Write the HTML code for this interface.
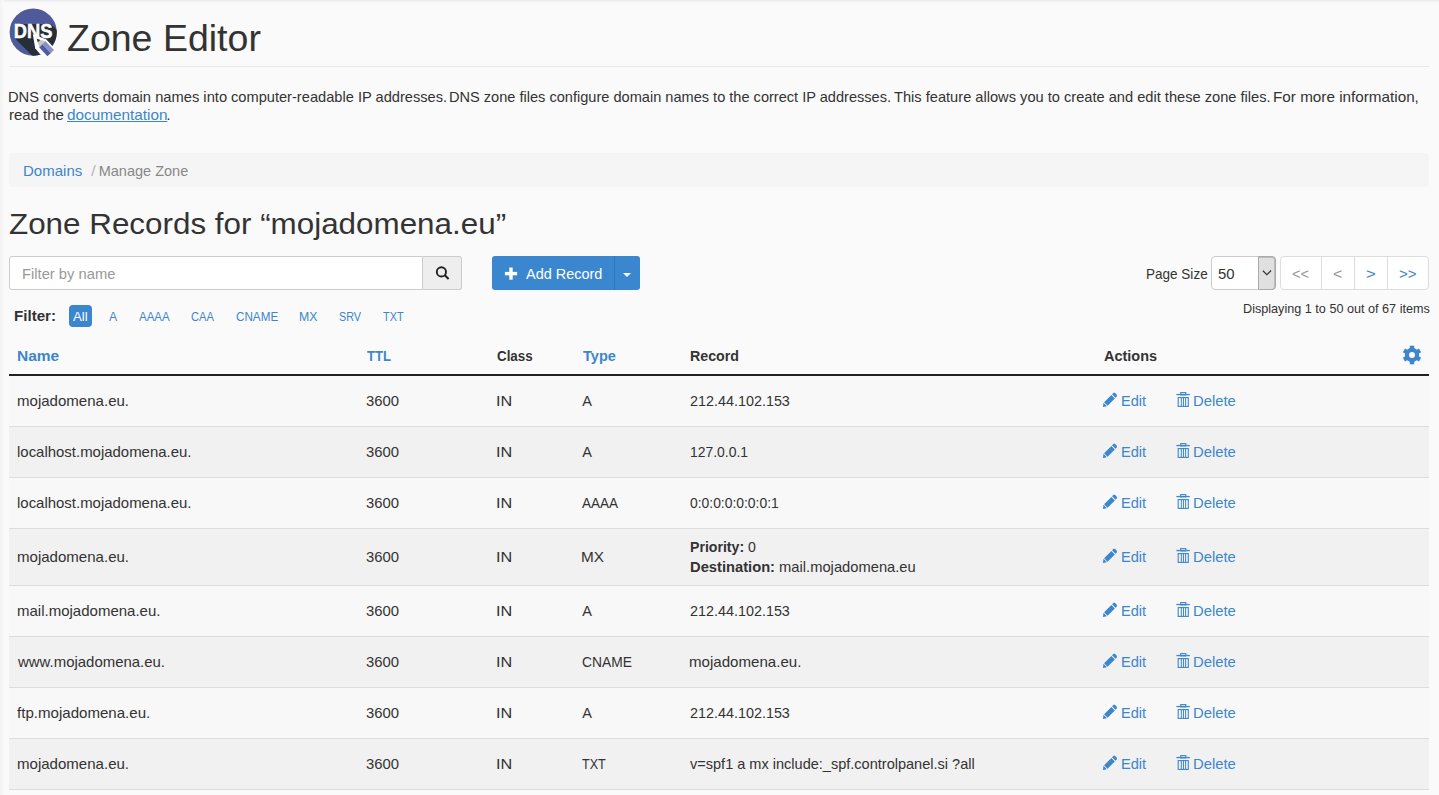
<!DOCTYPE html>
<html><head><meta charset="utf-8">
<style>
html,body{margin:0;padding:0;}
body{width:1439px;height:795px;overflow:hidden;background:#fafafa;position:relative;font-family:"Liberation Sans",sans-serif;color:#333;}
.a{position:absolute;}
.t{position:absolute;white-space:nowrap;line-height:1;}
</style></head><body>
<div class="a" style="left:0;top:0;width:1439px;height:1px;background:#ececec"></div><div class="a" style="left:0;top:1px;width:1439px;height:1px;background:#f3f3f3"></div><div class="a" style="left:0;top:2px;width:1439px;height:1px;background:#f7f7f7"></div>
<div class="a" style="left:0;top:0;width:2px;height:795px;background:#f4f4f4"></div><div class="a" style="left:2px;top:0;width:2px;height:795px;background:#f8f8f8"></div>
<svg class="a" style="left:0;top:0" width="70" height="66" viewBox="0 0 70 66">
  <defs><clipPath id="cc"><circle cx="33.2" cy="32.1" r="23.6"/></clipPath></defs>
  <circle cx="33.2" cy="32.1" r="24.3" fill="#fff"/>
  <circle cx="33.2" cy="32.1" r="23.6" fill="#4f5a9a"/>
  <g clip-path="url(#cc)">
    <polygon points="14.5,24 51,24 91,64 54.5,78 14.5,38" fill="#252f3a"/>
  </g>
  <text x="13.8" y="38.2" font-family="Liberation Sans" font-weight="bold" font-size="20" fill="#fff" stroke="#fff" stroke-width="0.5" textLength="38.6" lengthAdjust="spacingAndGlyphs">DNS</text>
  <polygon points="32.8,34 46.4,39.6 55.6,49.4 47.8,57.4 40.4,54.6 35.2,48.2" fill="#fff"/>
  <polygon points="36.9,38.9 45.4,41.3 39.3,47.4" fill="#c6c6c6"/>
  <polygon points="36.6,38.6 40.2,39.9 37.9,42.2" fill="#2a333d"/>
  <polygon points="42.35,44.35 45.4,41.3 54,50.1 50.8,53.3" fill="#8990c7"/>
  <polygon points="39.3,47.4 42.35,44.35 50.8,53.3 47.4,56.2" fill="#525ba1"/>
</svg>
<div class="a" style="left:9px;top:66px;width:1420px;height:1px;background:#e8e8e8"></div>
<div class="a" style="left:9px;top:153px;width:1420px;height:34px;background:#f5f5f5;border-radius:4px"></div>
<div class="a" style="left:9px;top:256px;width:412px;height:32px;background:#fff;border:1px solid #ccc;border-radius:3px 0 0 3px"></div>
<div class="a" style="left:423px;top:256px;width:38px;height:32px;background:#eee;border:1px solid #ccc;border-left:none;border-radius:0 3px 3px 0"></div>
<svg class="a" style="left:433px;top:263px" width="18" height="18" viewBox="0 0 18 18"><circle cx="8.4" cy="8.9" r="4.6" fill="none" stroke="#222" stroke-width="1.9"/><line x1="11.6" y1="12.1" x2="15.6" y2="16.1" stroke="#222" stroke-width="2.1"/></svg>
<div class="a" style="left:492px;top:256px;width:148px;height:34px;background:#3b87cf;border-radius:3px"></div>
<div class="a" style="left:614px;top:256px;width:1px;height:34px;background:#2f76ba"></div>
<svg class="a" style="left:504px;top:266px" width="15" height="15" viewBox="0 0 15 15"><rect x="5.3" y="1.5" width="3.4" height="12.2" fill="#fff"/><rect x="0.9" y="5.9" width="12.2" height="3.4" fill="#fff"/></svg>
<svg class="a" style="left:622px;top:272px" width="10" height="6" viewBox="0 0 10 6"><polygon points="1,1 9,1 5,5" fill="#fff"/></svg>
<div class="a" style="left:1211px;top:256px;width:63px;height:32px;background:#fff;border:1px solid #ccc;border-radius:4px"></div>
<div class="a" style="left:1258px;top:256px;width:16px;height:32px;background:#e0e0e0;border:1px solid #aaa;border-radius:0 4px 4px 0;box-shadow:inset 0 1px 0 #bdbdbd, inset -1px 0 0 #bdbdbd"></div>
<svg class="a" style="left:1260.5px;top:268px" width="12" height="9" viewBox="0 0 12 9"><polyline points="1.9,2.8 5.9,6.7 10.1,2.5" fill="none" stroke="#333" stroke-width="1.2"/></svg>
<div class="a" style="left:1280px;top:256px;width:147px;height:32px;background:#fff;border:1px solid #ddd;border-radius:4px"></div>
<div class="a" style="left:1321px;top:257px;width:1px;height:32px;background:#ddd"></div>
<div class="a" style="left:1354px;top:257px;width:1px;height:32px;background:#ddd"></div>
<div class="a" style="left:1387px;top:257px;width:1px;height:32px;background:#ddd"></div>
<div class="a" style="left:69px;top:305px;width:23px;height:22px;background:#3b87cf;border-radius:4px"></div>
<div class="a" style="left:9px;top:374px;width:1420px;height:2px;background:#222"></div>
<svg class="a" style="left:1402px;top:345px" width="20" height="20" viewBox="-10 -10 20 20">
<g fill="#3d86cc">
<circle r="7.2"/>
<rect x="-2.2" y="-9.3" width="4.4" height="4" transform="rotate(0)"/><rect x="-2.2" y="-9.3" width="4.4" height="4" transform="rotate(60)"/><rect x="-2.2" y="-9.3" width="4.4" height="4" transform="rotate(120)"/><rect x="-2.2" y="-9.3" width="4.4" height="4" transform="rotate(180)"/><rect x="-2.2" y="-9.3" width="4.4" height="4" transform="rotate(240)"/><rect x="-2.2" y="-9.3" width="4.4" height="4" transform="rotate(300)"/>
</g><circle r="3" fill="#fafafa"/></svg>
<div class="a" style="left:9px;top:376px;width:1420px;height:50px;background:#f8f8f8"></div><div class="a" style="left:9px;top:426px;width:1420px;height:1px;background:#ddd"></div><svg class="a" style="left:1102px;top:392px" width="17" height="16" viewBox="0 0 17 16"><path d="M0.9,14.9 L1.5,10.85 L4.95,14.3 Z M2.1,10.25 L9.41,2.94 L12.86,6.39 L5.55,13.7 Z M10.07,2.27 L11.53,0.81 L12.91,0.85 L14.95,2.89 L14.99,4.27 L13.53,5.73 Z" fill="#3d86cc"/></svg><svg class="a" style="left:1176px;top:392px" width="15" height="16" viewBox="0 0 15 16"><rect x="4.7" y="0.6" width="5.1" height="2.3" fill="none" stroke="#3d86cc" stroke-width="1.1"/><rect x="0.4" y="1.9" width="13.4" height="1.3" fill="#3d86cc"/><rect x="2.2" y="5.6" width="10.1" height="8.8" fill="none" stroke="#3d86cc" stroke-width="1.1"/><rect x="4.8" y="5.6" width="1" height="8.8" fill="#3d86cc"/><rect x="6.95" y="5.6" width="1" height="8.8" fill="#3d86cc"/><rect x="9.1" y="5.6" width="1" height="8.8" fill="#3d86cc"/></svg><div class="a" style="left:9px;top:427px;width:1420px;height:50px;background:#f1f1f1"></div><div class="a" style="left:9px;top:477px;width:1420px;height:1px;background:#ddd"></div><svg class="a" style="left:1102px;top:443px" width="17" height="16" viewBox="0 0 17 16"><path d="M0.9,14.9 L1.5,10.85 L4.95,14.3 Z M2.1,10.25 L9.41,2.94 L12.86,6.39 L5.55,13.7 Z M10.07,2.27 L11.53,0.81 L12.91,0.85 L14.95,2.89 L14.99,4.27 L13.53,5.73 Z" fill="#3d86cc"/></svg><svg class="a" style="left:1176px;top:443px" width="15" height="16" viewBox="0 0 15 16"><rect x="4.7" y="0.6" width="5.1" height="2.3" fill="none" stroke="#3d86cc" stroke-width="1.1"/><rect x="0.4" y="1.9" width="13.4" height="1.3" fill="#3d86cc"/><rect x="2.2" y="5.6" width="10.1" height="8.8" fill="none" stroke="#3d86cc" stroke-width="1.1"/><rect x="4.8" y="5.6" width="1" height="8.8" fill="#3d86cc"/><rect x="6.95" y="5.6" width="1" height="8.8" fill="#3d86cc"/><rect x="9.1" y="5.6" width="1" height="8.8" fill="#3d86cc"/></svg><div class="a" style="left:9px;top:478px;width:1420px;height:50px;background:#f8f8f8"></div><div class="a" style="left:9px;top:528px;width:1420px;height:1px;background:#ddd"></div><svg class="a" style="left:1102px;top:494px" width="17" height="16" viewBox="0 0 17 16"><path d="M0.9,14.9 L1.5,10.85 L4.95,14.3 Z M2.1,10.25 L9.41,2.94 L12.86,6.39 L5.55,13.7 Z M10.07,2.27 L11.53,0.81 L12.91,0.85 L14.95,2.89 L14.99,4.27 L13.53,5.73 Z" fill="#3d86cc"/></svg><svg class="a" style="left:1176px;top:494px" width="15" height="16" viewBox="0 0 15 16"><rect x="4.7" y="0.6" width="5.1" height="2.3" fill="none" stroke="#3d86cc" stroke-width="1.1"/><rect x="0.4" y="1.9" width="13.4" height="1.3" fill="#3d86cc"/><rect x="2.2" y="5.6" width="10.1" height="8.8" fill="none" stroke="#3d86cc" stroke-width="1.1"/><rect x="4.8" y="5.6" width="1" height="8.8" fill="#3d86cc"/><rect x="6.95" y="5.6" width="1" height="8.8" fill="#3d86cc"/><rect x="9.1" y="5.6" width="1" height="8.8" fill="#3d86cc"/></svg><div class="a" style="left:9px;top:529px;width:1420px;height:56px;background:#f1f1f1"></div><div class="a" style="left:9px;top:585px;width:1420px;height:1px;background:#ddd"></div><svg class="a" style="left:1102px;top:548px" width="17" height="16" viewBox="0 0 17 16"><path d="M0.9,14.9 L1.5,10.85 L4.95,14.3 Z M2.1,10.25 L9.41,2.94 L12.86,6.39 L5.55,13.7 Z M10.07,2.27 L11.53,0.81 L12.91,0.85 L14.95,2.89 L14.99,4.27 L13.53,5.73 Z" fill="#3d86cc"/></svg><svg class="a" style="left:1176px;top:548px" width="15" height="16" viewBox="0 0 15 16"><rect x="4.7" y="0.6" width="5.1" height="2.3" fill="none" stroke="#3d86cc" stroke-width="1.1"/><rect x="0.4" y="1.9" width="13.4" height="1.3" fill="#3d86cc"/><rect x="2.2" y="5.6" width="10.1" height="8.8" fill="none" stroke="#3d86cc" stroke-width="1.1"/><rect x="4.8" y="5.6" width="1" height="8.8" fill="#3d86cc"/><rect x="6.95" y="5.6" width="1" height="8.8" fill="#3d86cc"/><rect x="9.1" y="5.6" width="1" height="8.8" fill="#3d86cc"/></svg><div class="a" style="left:9px;top:586px;width:1420px;height:50px;background:#f8f8f8"></div><div class="a" style="left:9px;top:636px;width:1420px;height:1px;background:#ddd"></div><svg class="a" style="left:1102px;top:602px" width="17" height="16" viewBox="0 0 17 16"><path d="M0.9,14.9 L1.5,10.85 L4.95,14.3 Z M2.1,10.25 L9.41,2.94 L12.86,6.39 L5.55,13.7 Z M10.07,2.27 L11.53,0.81 L12.91,0.85 L14.95,2.89 L14.99,4.27 L13.53,5.73 Z" fill="#3d86cc"/></svg><svg class="a" style="left:1176px;top:602px" width="15" height="16" viewBox="0 0 15 16"><rect x="4.7" y="0.6" width="5.1" height="2.3" fill="none" stroke="#3d86cc" stroke-width="1.1"/><rect x="0.4" y="1.9" width="13.4" height="1.3" fill="#3d86cc"/><rect x="2.2" y="5.6" width="10.1" height="8.8" fill="none" stroke="#3d86cc" stroke-width="1.1"/><rect x="4.8" y="5.6" width="1" height="8.8" fill="#3d86cc"/><rect x="6.95" y="5.6" width="1" height="8.8" fill="#3d86cc"/><rect x="9.1" y="5.6" width="1" height="8.8" fill="#3d86cc"/></svg><div class="a" style="left:9px;top:637px;width:1420px;height:50px;background:#f1f1f1"></div><div class="a" style="left:9px;top:687px;width:1420px;height:1px;background:#ddd"></div><svg class="a" style="left:1102px;top:653px" width="17" height="16" viewBox="0 0 17 16"><path d="M0.9,14.9 L1.5,10.85 L4.95,14.3 Z M2.1,10.25 L9.41,2.94 L12.86,6.39 L5.55,13.7 Z M10.07,2.27 L11.53,0.81 L12.91,0.85 L14.95,2.89 L14.99,4.27 L13.53,5.73 Z" fill="#3d86cc"/></svg><svg class="a" style="left:1176px;top:653px" width="15" height="16" viewBox="0 0 15 16"><rect x="4.7" y="0.6" width="5.1" height="2.3" fill="none" stroke="#3d86cc" stroke-width="1.1"/><rect x="0.4" y="1.9" width="13.4" height="1.3" fill="#3d86cc"/><rect x="2.2" y="5.6" width="10.1" height="8.8" fill="none" stroke="#3d86cc" stroke-width="1.1"/><rect x="4.8" y="5.6" width="1" height="8.8" fill="#3d86cc"/><rect x="6.95" y="5.6" width="1" height="8.8" fill="#3d86cc"/><rect x="9.1" y="5.6" width="1" height="8.8" fill="#3d86cc"/></svg><div class="a" style="left:9px;top:688px;width:1420px;height:50px;background:#f8f8f8"></div><div class="a" style="left:9px;top:738px;width:1420px;height:1px;background:#ddd"></div><svg class="a" style="left:1102px;top:704px" width="17" height="16" viewBox="0 0 17 16"><path d="M0.9,14.9 L1.5,10.85 L4.95,14.3 Z M2.1,10.25 L9.41,2.94 L12.86,6.39 L5.55,13.7 Z M10.07,2.27 L11.53,0.81 L12.91,0.85 L14.95,2.89 L14.99,4.27 L13.53,5.73 Z" fill="#3d86cc"/></svg><svg class="a" style="left:1176px;top:704px" width="15" height="16" viewBox="0 0 15 16"><rect x="4.7" y="0.6" width="5.1" height="2.3" fill="none" stroke="#3d86cc" stroke-width="1.1"/><rect x="0.4" y="1.9" width="13.4" height="1.3" fill="#3d86cc"/><rect x="2.2" y="5.6" width="10.1" height="8.8" fill="none" stroke="#3d86cc" stroke-width="1.1"/><rect x="4.8" y="5.6" width="1" height="8.8" fill="#3d86cc"/><rect x="6.95" y="5.6" width="1" height="8.8" fill="#3d86cc"/><rect x="9.1" y="5.6" width="1" height="8.8" fill="#3d86cc"/></svg><div class="a" style="left:9px;top:739px;width:1420px;height:50px;background:#f1f1f1"></div><div class="a" style="left:9px;top:789px;width:1420px;height:1px;background:#ddd"></div><svg class="a" style="left:1102px;top:755px" width="17" height="16" viewBox="0 0 17 16"><path d="M0.9,14.9 L1.5,10.85 L4.95,14.3 Z M2.1,10.25 L9.41,2.94 L12.86,6.39 L5.55,13.7 Z M10.07,2.27 L11.53,0.81 L12.91,0.85 L14.95,2.89 L14.99,4.27 L13.53,5.73 Z" fill="#3d86cc"/></svg><svg class="a" style="left:1176px;top:755px" width="15" height="16" viewBox="0 0 15 16"><rect x="4.7" y="0.6" width="5.1" height="2.3" fill="none" stroke="#3d86cc" stroke-width="1.1"/><rect x="0.4" y="1.9" width="13.4" height="1.3" fill="#3d86cc"/><rect x="2.2" y="5.6" width="10.1" height="8.8" fill="none" stroke="#3d86cc" stroke-width="1.1"/><rect x="4.8" y="5.6" width="1" height="8.8" fill="#3d86cc"/><rect x="6.95" y="5.6" width="1" height="8.8" fill="#3d86cc"/><rect x="9.1" y="5.6" width="1" height="8.8" fill="#3d86cc"/></svg>
<div class="t" id="title" style="left:66.65px;top:20px;font-size:37px;font-weight:normal;color:#333;transform:scaleX(1.0136);transform-origin:0 0;">Zone Editor</div><div class="t" id="d1c0" style="left:8.22px;top:90px;font-size:14.5px;font-weight:normal;color:#333;transform:scaleX(1.0143);transform-origin:0 0;">DNS converts domain names into</div><div class="t" id="d1c1" style="left:230.74px;top:90px;font-size:14.5px;font-weight:normal;color:#333;transform:scaleX(1.0091);transform-origin:0 0;">computer-readable IP addresses.</div><div class="t" id="d1c2" style="left:449.03px;top:90px;font-size:14.5px;font-weight:normal;color:#333;transform:scaleX(1.0051);transform-origin:0 0;">DNS zone files configure domain names to the correct IP addresses.</div><div class="t" id="d1c3" style="left:893.81px;top:90px;font-size:14.5px;font-weight:normal;color:#333;transform:scaleX(1.0092);transform-origin:0 0;">This feature allows you to create and edit these zone files.</div><div class="t" id="d1c4" style="left:1272.87px;top:90px;font-size:14.5px;font-weight:normal;color:#333;transform:scaleX(1.0524);transform-origin:0 0;">For more information,</div><div class="t" id="d2a" style="left:8.89px;top:108px;font-size:14.5px;font-weight:normal;color:#333;transform:scaleX(1.0307);transform-origin:0 0;">read the</div><div class="t" id="d2b" style="left:66.80px;top:108px;font-size:14.5px;font-weight:normal;color:#3d86cc;transform:scaleX(1.0555);transform-origin:0 0;text-decoration:underline;text-decoration-skip-ink:none;">documentation</div><div class="t" id="d2c" style="left:166.61px;top:108px;font-size:14.5px;font-weight:normal;color:#333;">.</div><div class="t" id="bc1" style="left:23.29px;top:164px;font-size:14.5px;font-weight:normal;color:#3d86cc;transform:scaleX(1.0353);transform-origin:0 0;">Domains</div><div class="t" id="bc2" style="left:91.08px;top:164px;font-size:14.5px;font-weight:normal;color:#bbb;transform:scaleX(1.1961);transform-origin:0 0;">/</div><div class="t" id="bc3" style="left:98.73px;top:164px;font-size:14.5px;font-weight:normal;color:#888;">Manage Zone</div><div class="t" id="h2" style="left:8.89px;top:209px;font-size:30px;font-weight:normal;color:#333;transform:scaleX(1.0460);transform-origin:0 0;">Zone Records for “mojadomena.eu”</div><div class="t" id="ph" style="left:21.71px;top:267px;font-size:14.5px;font-weight:normal;color:#999;transform:scaleX(1.0168);transform-origin:0 0;">Filter by name</div><div class="t" id="add" style="left:525.98px;top:267px;font-size:14.5px;font-weight:normal;color:#fff;transform:scaleX(0.9967);transform-origin:0 0;">Add Record</div><div class="t" id="ps" style="left:1146.12px;top:267px;font-size:14.5px;font-weight:normal;color:#333;transform:scaleX(0.9329);transform-origin:0 0;">Page Size</div><div class="t" id="ps50" style="left:1217.85px;top:267px;font-size:14.5px;font-weight:normal;color:#333;transform:scaleX(1.0263);transform-origin:0 0;">50</div><div class="t" id="p1" style="left:1292.43px;top:267px;font-size:14.5px;font-weight:normal;color:#999;transform:scaleX(0.9971);transform-origin:0 0;">&lt;&lt;</div><div class="t" id="p2" style="left:1333.16px;top:267px;font-size:14.5px;font-weight:normal;color:#999;transform:scaleX(1.0962);transform-origin:0 0;">&lt;</div><div class="t" id="p3" style="left:1365.92px;top:267px;font-size:14.5px;font-weight:normal;color:#3d86cc;transform:scaleX(1.1474);transform-origin:0 0;">&gt;</div><div class="t" id="p4" style="left:1398.71px;top:267px;font-size:14.5px;font-weight:normal;color:#3d86cc;transform:scaleX(1.0349);transform-origin:0 0;">&gt;&gt;</div><div class="t" id="disp" style="left:1242.51px;top:302px;font-size:13px;font-weight:normal;color:#333;transform:scaleX(0.9721);transform-origin:0 0;">Displaying 1 to 50 out of 67 items</div><div class="t" id="filt" style="left:13.68px;top:309px;font-size:14.5px;font-weight:bold;color:#333;transform:scaleX(1.0429);transform-origin:0 0;">Filter:</div><div class="t" id="fAll" style="left:73.07px;top:310px;font-size:13px;font-weight:normal;color:#fff;transform:scaleX(1.0185);transform-origin:0 0;">All</div><div class="t" id="fA" style="left:108.69px;top:310px;font-size:13px;font-weight:normal;color:#3d86cc;transform:scaleX(0.9413);transform-origin:0 0;">A</div><div class="t" id="fAAAA" style="left:138.71px;top:310px;font-size:13px;font-weight:normal;color:#3d86cc;transform:scaleX(0.8865);transform-origin:0 0;">AAAA</div><div class="t" id="fCAA" style="left:190.91px;top:310px;font-size:13px;font-weight:normal;color:#3d86cc;transform:scaleX(0.8559);transform-origin:0 0;">CAA</div><div class="t" id="fCNAME" style="left:235.78px;top:310px;font-size:13px;font-weight:normal;color:#3d86cc;transform:scaleX(0.8981);transform-origin:0 0;">CNAME</div><div class="t" id="fMX" style="left:299.44px;top:310px;font-size:13px;font-weight:normal;color:#3d86cc;transform:scaleX(0.9457);transform-origin:0 0;">MX</div><div class="t" id="fSRV" style="left:338.89px;top:310px;font-size:13px;font-weight:normal;color:#3d86cc;transform:scaleX(0.8332);transform-origin:0 0;">SRV</div><div class="t" id="fTXT" style="left:382.70px;top:310px;font-size:13px;font-weight:normal;color:#3d86cc;transform:scaleX(0.8362);transform-origin:0 0;">TXT</div><div class="t" id="hName" style="left:16.86px;top:349px;font-size:14.5px;font-weight:bold;color:#3d86cc;transform:scaleX(1.0691);transform-origin:0 0;">Name</div><div class="t" id="hTTL" style="left:367.26px;top:349px;font-size:14.5px;font-weight:bold;color:#3d86cc;transform:scaleX(0.9031);transform-origin:0 0;">TTL</div><div class="t" id="hClass" style="left:496.69px;top:349px;font-size:14.5px;font-weight:bold;color:#333;transform:scaleX(0.9213);transform-origin:0 0;">Class</div><div class="t" id="hType" style="left:582.96px;top:349px;font-size:14.5px;font-weight:bold;color:#3d86cc;transform:scaleX(1.0022);transform-origin:0 0;">Type</div><div class="t" id="hRecord" style="left:689.63px;top:349px;font-size:14.5px;font-weight:bold;color:#333;transform:scaleX(0.9807);transform-origin:0 0;">Record</div><div class="t" id="hActions" style="left:1103.63px;top:349px;font-size:14.5px;font-weight:bold;color:#333;transform:scaleX(0.9974);transform-origin:0 0;">Actions</div><div class="t" id="r0name" style="left:16.68px;top:394px;font-size:14.5px;font-weight:normal;color:#333;transform:scaleX(1.0373);transform-origin:0 0;">mojadomena.eu.</div><div class="t" id="r0ttl" style="left:366.44px;top:394px;font-size:14.5px;font-weight:normal;color:#333;transform:scaleX(1.0250);transform-origin:0 0;">3600</div><div class="t" id="r0in" style="left:495.62px;top:394px;font-size:14.5px;font-weight:normal;color:#333;transform:scaleX(1.1185);transform-origin:0 0;">IN</div><div class="t" id="r0type" style="left:582.18px;top:394px;font-size:14.5px;font-weight:normal;color:#333;">A</div><div class="t" id="r0rec" style="left:689.67px;top:394px;font-size:14.5px;font-weight:normal;color:#333;transform:scaleX(0.9907);transform-origin:0 0;">212.44.102.153</div><div class="t" id="r0edit" style="left:1120.63px;top:394px;font-size:14.5px;font-weight:normal;color:#3d86cc;transform:scaleX(1.0064);transform-origin:0 0;">Edit</div><div class="t" id="r0del" style="left:1192.50px;top:394px;font-size:14.5px;font-weight:normal;color:#3d86cc;transform:scaleX(1.0228);transform-origin:0 0;">Delete</div><div class="t" id="r1name" style="left:16.69px;top:445px;font-size:14.5px;font-weight:normal;color:#333;transform:scaleX(1.0307);transform-origin:0 0;">localhost.mojadomena.eu.</div><div class="t" id="r1ttl" style="left:366.44px;top:445px;font-size:14.5px;font-weight:normal;color:#333;transform:scaleX(1.0250);transform-origin:0 0;">3600</div><div class="t" id="r1in" style="left:495.62px;top:445px;font-size:14.5px;font-weight:normal;color:#333;transform:scaleX(1.1185);transform-origin:0 0;">IN</div><div class="t" id="r1type" style="left:582.18px;top:445px;font-size:14.5px;font-weight:normal;color:#333;">A</div><div class="t" id="r1rec" style="left:689.50px;top:445px;font-size:14.5px;font-weight:normal;color:#333;transform:scaleX(0.9598);transform-origin:0 0;">127.0.0.1</div><div class="t" id="r1edit" style="left:1120.63px;top:445px;font-size:14.5px;font-weight:normal;color:#3d86cc;transform:scaleX(1.0064);transform-origin:0 0;">Edit</div><div class="t" id="r1del" style="left:1192.50px;top:445px;font-size:14.5px;font-weight:normal;color:#3d86cc;transform:scaleX(1.0228);transform-origin:0 0;">Delete</div><div class="t" id="r2name" style="left:16.69px;top:496px;font-size:14.5px;font-weight:normal;color:#333;transform:scaleX(1.0307);transform-origin:0 0;">localhost.mojadomena.eu.</div><div class="t" id="r2ttl" style="left:366.44px;top:496px;font-size:14.5px;font-weight:normal;color:#333;transform:scaleX(1.0250);transform-origin:0 0;">3600</div><div class="t" id="r2in" style="left:495.62px;top:496px;font-size:14.5px;font-weight:normal;color:#333;transform:scaleX(1.1185);transform-origin:0 0;">IN</div><div class="t" id="r2type" style="left:582.20px;top:496px;font-size:14.5px;font-weight:normal;color:#333;transform:scaleX(0.9348);transform-origin:0 0;">AAAA</div><div class="t" id="r2rec" style="left:689.82px;top:496px;font-size:14.5px;font-weight:normal;color:#333;transform:scaleX(0.9570);transform-origin:0 0;">0:0:0:0:0:0:0:1</div><div class="t" id="r2edit" style="left:1120.63px;top:496px;font-size:14.5px;font-weight:normal;color:#3d86cc;transform:scaleX(1.0064);transform-origin:0 0;">Edit</div><div class="t" id="r2del" style="left:1192.50px;top:496px;font-size:14.5px;font-weight:normal;color:#3d86cc;transform:scaleX(1.0228);transform-origin:0 0;">Delete</div><div class="t" id="r3name" style="left:16.68px;top:550px;font-size:14.5px;font-weight:normal;color:#333;transform:scaleX(1.0373);transform-origin:0 0;">mojadomena.eu.</div><div class="t" id="r3ttl" style="left:366.44px;top:550px;font-size:14.5px;font-weight:normal;color:#333;transform:scaleX(1.0250);transform-origin:0 0;">3600</div><div class="t" id="r3in" style="left:495.62px;top:550px;font-size:14.5px;font-weight:normal;color:#333;transform:scaleX(1.1185);transform-origin:0 0;">IN</div><div class="t" id="r3type" style="left:581.16px;top:550px;font-size:14.5px;font-weight:normal;color:#333;transform:scaleX(1.0581);transform-origin:0 0;">MX</div><div class="t" id="r3pri" style="left:689.64px;top:540px;font-size:14.5px;font-weight:normal;color:#333;transform:scaleX(0.9733);transform-origin:0 0;"><b>Priority:</b> 0</div><div class="t" id="r3dst" style="left:689.60px;top:560px;font-size:14.5px;font-weight:normal;color:#333;transform:scaleX(1.0148);transform-origin:0 0;"><b>Destination:</b> mail.mojadomena.eu</div><div class="t" id="r3edit" style="left:1120.63px;top:550px;font-size:14.5px;font-weight:normal;color:#3d86cc;transform:scaleX(1.0064);transform-origin:0 0;">Edit</div><div class="t" id="r3del" style="left:1192.50px;top:550px;font-size:14.5px;font-weight:normal;color:#3d86cc;transform:scaleX(1.0228);transform-origin:0 0;">Delete</div><div class="t" id="r4name" style="left:16.68px;top:604px;font-size:14.5px;font-weight:normal;color:#333;transform:scaleX(1.0349);transform-origin:0 0;">mail.mojadomena.eu.</div><div class="t" id="r4ttl" style="left:366.44px;top:604px;font-size:14.5px;font-weight:normal;color:#333;transform:scaleX(1.0250);transform-origin:0 0;">3600</div><div class="t" id="r4in" style="left:495.62px;top:604px;font-size:14.5px;font-weight:normal;color:#333;transform:scaleX(1.1185);transform-origin:0 0;">IN</div><div class="t" id="r4type" style="left:582.18px;top:604px;font-size:14.5px;font-weight:normal;color:#333;">A</div><div class="t" id="r4rec" style="left:689.67px;top:604px;font-size:14.5px;font-weight:normal;color:#333;transform:scaleX(0.9907);transform-origin:0 0;">212.44.102.153</div><div class="t" id="r4edit" style="left:1120.63px;top:604px;font-size:14.5px;font-weight:normal;color:#3d86cc;transform:scaleX(1.0064);transform-origin:0 0;">Edit</div><div class="t" id="r4del" style="left:1192.50px;top:604px;font-size:14.5px;font-weight:normal;color:#3d86cc;transform:scaleX(1.0228);transform-origin:0 0;">Delete</div><div class="t" id="r5name" style="left:17.67px;top:655px;font-size:14.5px;font-weight:normal;color:#333;transform:scaleX(1.0304);transform-origin:0 0;">www.mojadomena.eu.</div><div class="t" id="r5ttl" style="left:366.44px;top:655px;font-size:14.5px;font-weight:normal;color:#333;transform:scaleX(1.0250);transform-origin:0 0;">3600</div><div class="t" id="r5in" style="left:495.62px;top:655px;font-size:14.5px;font-weight:normal;color:#333;transform:scaleX(1.1185);transform-origin:0 0;">IN</div><div class="t" id="r5type" style="left:581.77px;top:655px;font-size:14.5px;font-weight:normal;color:#333;transform:scaleX(0.9530);transform-origin:0 0;">CNAME</div><div class="t" id="r5rec" style="left:689.48px;top:655px;font-size:14.5px;font-weight:normal;color:#333;transform:scaleX(1.0401);transform-origin:0 0;">mojadomena.eu.</div><div class="t" id="r5edit" style="left:1120.63px;top:655px;font-size:14.5px;font-weight:normal;color:#3d86cc;transform:scaleX(1.0064);transform-origin:0 0;">Edit</div><div class="t" id="r5del" style="left:1192.50px;top:655px;font-size:14.5px;font-weight:normal;color:#3d86cc;transform:scaleX(1.0228);transform-origin:0 0;">Delete</div><div class="t" id="r6name" style="left:17.30px;top:706px;font-size:14.5px;font-weight:normal;color:#333;transform:scaleX(1.0397);transform-origin:0 0;">ftp.mojadomena.eu.</div><div class="t" id="r6ttl" style="left:366.44px;top:706px;font-size:14.5px;font-weight:normal;color:#333;transform:scaleX(1.0250);transform-origin:0 0;">3600</div><div class="t" id="r6in" style="left:495.62px;top:706px;font-size:14.5px;font-weight:normal;color:#333;transform:scaleX(1.1185);transform-origin:0 0;">IN</div><div class="t" id="r6type" style="left:582.18px;top:706px;font-size:14.5px;font-weight:normal;color:#333;">A</div><div class="t" id="r6rec" style="left:689.67px;top:706px;font-size:14.5px;font-weight:normal;color:#333;transform:scaleX(0.9907);transform-origin:0 0;">212.44.102.153</div><div class="t" id="r6edit" style="left:1120.63px;top:706px;font-size:14.5px;font-weight:normal;color:#3d86cc;transform:scaleX(1.0064);transform-origin:0 0;">Edit</div><div class="t" id="r6del" style="left:1192.50px;top:706px;font-size:14.5px;font-weight:normal;color:#3d86cc;transform:scaleX(1.0228);transform-origin:0 0;">Delete</div><div class="t" id="r7name" style="left:16.68px;top:757px;font-size:14.5px;font-weight:normal;color:#333;transform:scaleX(1.0373);transform-origin:0 0;">mojadomena.eu.</div><div class="t" id="r7ttl" style="left:366.44px;top:757px;font-size:14.5px;font-weight:normal;color:#333;transform:scaleX(1.0250);transform-origin:0 0;">3600</div><div class="t" id="r7in" style="left:495.62px;top:757px;font-size:14.5px;font-weight:normal;color:#333;transform:scaleX(1.1185);transform-origin:0 0;">IN</div><div class="t" id="r7type" style="left:582.17px;top:757px;font-size:14.5px;font-weight:normal;color:#333;transform:scaleX(0.8694);transform-origin:0 0;">TXT</div><div class="t" id="r7rec" style="left:690.09px;top:757px;font-size:14.5px;font-weight:normal;color:#333;transform:scaleX(1.0020);transform-origin:0 0;">v=spf1 a mx include:_spf.controlpanel.si ?all</div><div class="t" id="r7edit" style="left:1120.63px;top:757px;font-size:14.5px;font-weight:normal;color:#3d86cc;transform:scaleX(1.0064);transform-origin:0 0;">Edit</div><div class="t" id="r7del" style="left:1192.50px;top:757px;font-size:14.5px;font-weight:normal;color:#3d86cc;transform:scaleX(1.0228);transform-origin:0 0;">Delete</div>
</body></html>
